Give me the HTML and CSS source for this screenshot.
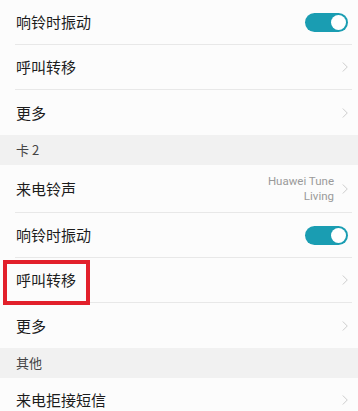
FILE: index.html
```html
<!DOCTYPE html>
<html lang="zh">
<head>
<meta charset="utf-8">
<link rel="stylesheet" href="styles.css">
</head>
<body>
<div class="page">
  <div class="group">
    <div class="row"><span class="label">响铃时振动</span><span class="toggle"><span class="knob"></span></span></div>
    <div class="row"><span class="label">呼叫转移</span><svg class="chev" viewBox="0 0 8 14"><polyline points="1,1 7,7 1,13"/></svg></div>
    <div class="row last"><span class="label">更多</span><svg class="chev" viewBox="0 0 8 14"><polyline points="1,1 7,7 1,13"/></svg></div>
  </div>
  <div class="header">卡 2</div>
  <div class="group">
    <div class="row tall"><span class="label">来电铃声</span><span class="right"><span class="value">Huawei Tune<br>Living</span><svg class="chev" viewBox="0 0 8 14"><polyline points="1,1 7,7 1,13"/></svg></span></div>
    <div class="row"><span class="label">响铃时振动</span><span class="toggle"><span class="knob"></span></span></div>
    <div class="row marked"><span class="label">呼叫转移</span><svg class="chev" viewBox="0 0 8 14"><polyline points="1,1 7,7 1,13"/></svg><span class="highlight"></span></div>
    <div class="row last"><span class="label">更多</span><svg class="chev" viewBox="0 0 8 14"><polyline points="1,1 7,7 1,13"/></svg></div>
  </div>
  <div class="header">其他</div>
  <div class="group">
    <div class="row"><span class="label">来电拒接短信</span><svg class="chev" viewBox="0 0 8 14"><polyline points="1,1 7,7 1,13"/></svg></div>
  </div>
</div>
</body>
</html>
```
FILE: styles.css
```css
html, body {
  margin: 0;
  padding: 0;
  background: #fcfcfc;
}
.page {
  width: 358px;
  height: 411px;
  overflow: hidden;
  font-family: "Noto Sans CJK SC", "Noto Sans", sans-serif;
  color: #1c1c1c;
}
.group {
  background: #fcfcfc;
}
.row {
  position: relative;
  height: 44px;
  margin: 0 6px 0 15px;
  padding: 0 4px 0 1px;
  border-bottom: 1px solid #e8e8e8;
  display: flex;
  align-items: center;
  justify-content: space-between;
}
.row.last {
  border-bottom: none;
  height: 45px;
}
.row.tall {
  height: 47px;
}
.label {
  font-size: 15px;
  line-height: 20px;
}
.header {
  height: 30px;
  background: #f1f1f1;
  padding-left: 16px;
  font-size: 13px;
  line-height: 30px;
  color: #444;
}
.toggle {
  width: 43px;
  height: 19px;
  border-radius: 10px;
  background: #1a9db2;
  display: flex;
  align-items: center;
  justify-content: flex-end;
  padding-right: 2px;
  box-sizing: border-box;
}
.knob {
  width: 15px;
  height: 15px;
  border-radius: 50%;
  background: #fff;
}
.chev {
  width: 6px;
  height: 12px;
  fill: none;
  stroke: #c2c2c2;
  stroke-width: 1.1;
}
.right {
  display: flex;
  align-items: center;
  gap: 8px;
}
.value {
  font-family: "Roboto", "Noto Sans", sans-serif;
  font-size: 11.5px;
  line-height: 15px;
  color: #9a9a9a;
  text-align: right;
}
.highlight {
  position: absolute;
  left: -12px;
  top: 2px;
  width: 87px;
  height: 45px;
  border: 4px solid #e2202b;
  box-sizing: border-box;
}
```
